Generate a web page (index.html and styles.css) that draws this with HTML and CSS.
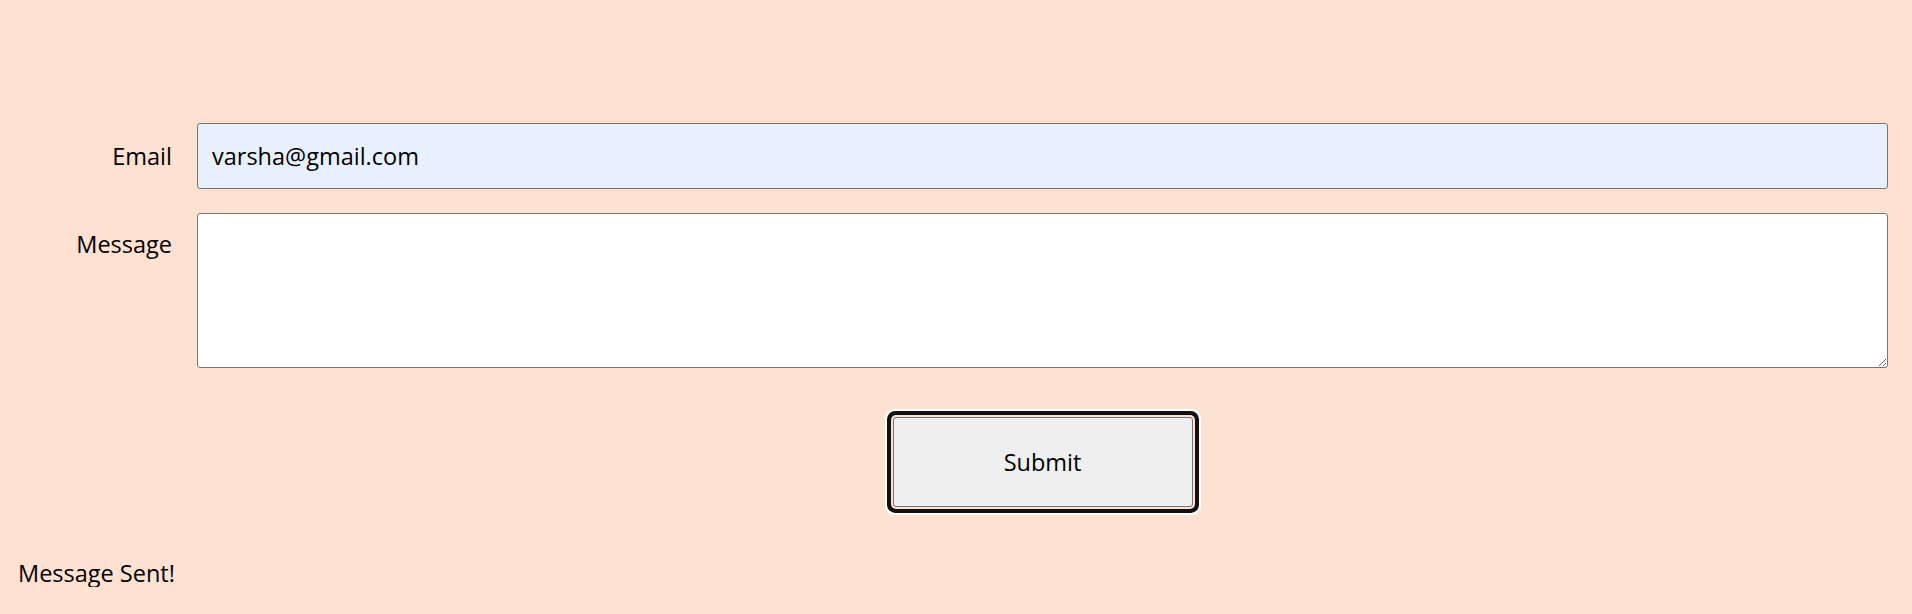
FILE: index.html
```html
<!DOCTYPE html>
<html lang="en">
<head>
<meta charset="utf-8">
<title>Contact</title>
<link rel="stylesheet" href="styles.css">
</head>
<body>
<form class="contact-form">
  <label class="field-label" for="email">Email</label>
  <input class="field-input" id="email" type="email" value="varsha@gmail.com">
  <label class="field-label field-label-top" for="message">Message</label>
  <textarea class="field-textarea" id="message"></textarea>
  <div class="actions">
    <button class="submit-btn" type="button">Submit</button>
  </div>
</form>
<p class="status">Message Sent!</p>
</body>
</html>
```
FILE: styles.css
```css
html, body {
  margin: 0;
  padding: 0;
  background: #fde1d1;
}
body {
  font-family: "Open Sans", "Liberation Sans", sans-serif;
  font-size: 23.5px;
  color: #000;
}
.contact-form {
  display: grid;
  grid-template-columns: 172px 1fr;
  column-gap: 25px;
  row-gap: 24px;
  padding: 123px 24px 0 0;
  margin: 0;
  align-items: start;
}
.field-label {
  text-align: right;
  line-height: 66px;
}
.field-label-top {
  line-height: 62px;
}
.field-input,
.field-textarea {
  box-sizing: border-box;
  width: 100%;
  margin: 0;
  font: inherit;
  color: #000;
  border: 1px solid #767676;
  border-radius: 3px;
  padding: 0 14px;
}
.field-input {
  height: 66px;
  background: #e8f0fe;
}
.field-textarea {
  height: 155px;
  background: #fff;
  display: block;
  padding-top: 10px;
}
.actions {
  grid-column: 2;
  display: flex;
  justify-content: center;
  padding-top: 25px;
}
.submit-btn {
  width: 300px;
  height: 90px;
  font: inherit;
  color: #000;
  background: #efefef;
  border: 1px solid #767676;
  border-radius: 3px;
  box-shadow: 0 0 0 2px #fde1d1, 0 0 0 6px #111, 0 0 0 8px #fff;
  outline: none;
}
.status {
  margin: 52px 0 0 18px;
  line-height: 28px;
}
```
